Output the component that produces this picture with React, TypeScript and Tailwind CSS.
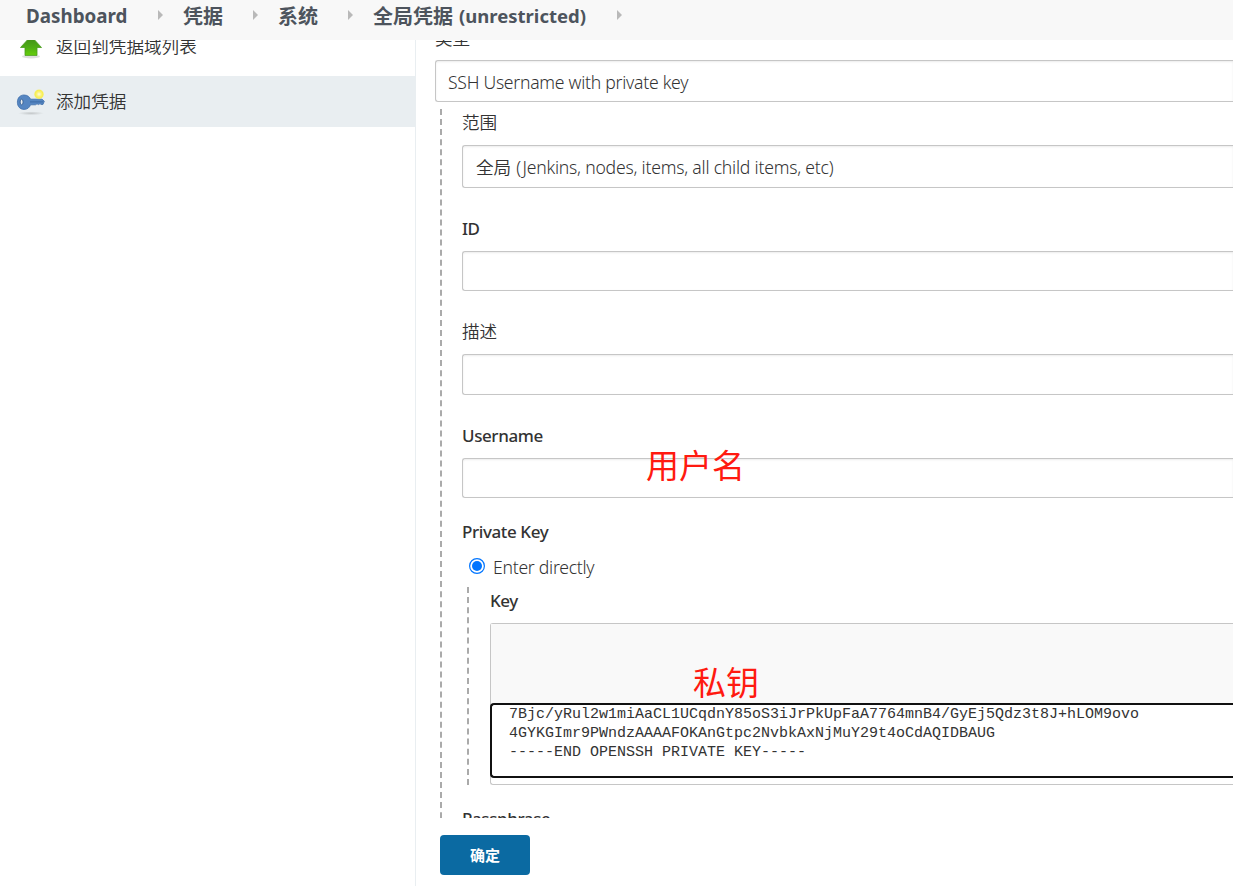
import React from 'react';

const crumbs = [
    { label: 'Dashboard', width: 'w-[156px]' },
    { label: '凭据', width: 'w-[95px]' },
    { label: '系统', width: 'w-[95px]' },
    { label: '全局凭据', suffix: '(unrestricted)', width: 'w-[269px]' },
];

const keyLines = [
    '7Bjc/yRul2w1miAaCL1UCqdnY85oS3iJrPkUpFaA7764mnB4/GyEj5Qdz3t8J+hLOM9ovo',
    '4GYKGImr9PWndzAAAAFOKAnGtpc2NvbkAxNjMuY29t4oCdAQIDBAUG',
    '-----END OPENSSH PRIVATE KEY-----',
];

const UpIcon = () => (
    <svg width="28" height="30" viewBox="0 0 28 30" className="shrink-0">
        <defs>
            <linearGradient id="up" x1="0" y1="0" x2="0" y2="1">
                <stop offset="0" stopColor="#3f8a1a" />
                <stop offset="0.6" stopColor="#4fae14" />
                <stop offset="1" stopColor="#66cf0a" />
            </linearGradient>
        </defs>
        <ellipse cx="14" cy="24.6" rx="9" ry="1.8" fill="#dedede" />
        <path d="M14 4 L24.5 15.5 H20 V23.4 H8 V15.5 H3.5 Z" fill="url(#up)" stroke="#4a9d20" strokeWidth="0.8" strokeLinejoin="round" />
    </svg>
);

const KeyIcon = () => (
    <svg width="30" height="28" viewBox="0 0 30 28" className="shrink-0">
        <defs>
            <radialGradient id="glow">
                <stop offset="0" stopColor="#fffde0" />
                <stop offset="0.45" stopColor="#fbf27a" />
                <stop offset="0.8" stopColor="#f7ee4e" />
                <stop offset="1" stopColor="#f7ee4e" stopOpacity="0.3" />
            </radialGradient>
            <radialGradient id="shade">
                <stop offset="0" stopColor="#c3c7c9" />
                <stop offset="1" stopColor="#e9eef1" />
            </radialGradient>
        </defs>
        <ellipse cx="15" cy="25.3" rx="13" ry="1.9" fill="url(#shade)" />
        <path d="M8 7 C11.5 7 13.8 9 14.5 11.2 H26 L28.3 13.2 L27 16.4 H25 L24 15.6 L22.6 16.6 L21 15.8 L19.5 16.8 H14.5 C13.5 19.6 11.5 21.4 8 21.4 C4 21.4 1.4 18.4 1.4 14.2 C1.4 10 4 7 8 7 Z" fill="#5586c2" stroke="#3f6fab" strokeWidth="0.8" />
        <path d="M14 13.9 H27" stroke="#3a68a3" strokeWidth="0.9" />
        <ellipse cx="5.6" cy="14" rx="1.5" ry="2.8" fill="#e8edf0" stroke="#365f92" strokeWidth="0.9" />
        <circle cx="23" cy="6.2" r="5" fill="url(#glow)" />
    </svg>
);

const inputClass = 'w-full bg-white border border-r-0 border-[#c6c6c6] rounded-l-[3px] shadow-[inset_0_1px_2px_rgba(0,0,0,0.08)]';
const labelClass = 'leading-[26px] text-[17px] tracking-[-0.4px] font-medium';

const App: React.FC = () => {
    return (
        <div className="flex flex-col w-[1233px] h-[886px] overflow-hidden bg-white text-[#333] text-[17.6px] font-['Noto_Sans','Noto_Sans_CJK_SC',sans-serif]">
            <header className="flex h-10 shrink-0 items-start bg-[#f8f8f8] pl-[26px] text-[#4d545d] font-bold">
                {crumbs.map(c => (
                    <div key={c.label} className={`relative ${c.width} h-8 leading-8 whitespace-nowrap`}>
                        <span className={c.label === 'Dashboard' ? 'text-[18.8px]' : 'relative top-px ml-px text-[20px]'}>{c.label}</span>
                        {c.suffix && <span className="ml-[6px] text-[18.5px]">{c.suffix}</span>}
                        <svg width="5" height="10" viewBox="0 0 5 10" className="absolute right-[19px] top-[10px]">
                            <path d="M0 0 L5 5 L0 10 Z" fill="#b9b9b9" />
                        </svg>
                    </div>
                ))}
            </header>

            <div className="flex flex-1 min-h-0">
                <aside className="w-[416px] shrink-0 border-r border-[#e9eef1]">
                    <div className="flex h-9 items-start overflow-hidden pl-[17px]">
                        <div className="-mt-[8px]"><UpIcon /></div>
                        <span className="ml-[11px] -mt-[7px] leading-[26px] font-[350]">返回到凭据域列表</span>
                    </div>
                    <div className="flex h-[51px] items-center bg-[#e9eef1] pl-4">
                        <KeyIcon />
                        <span className="ml-[10px] font-[350]">添加凭据</span>
                    </div>
                </aside>

                <main className="flex flex-1 min-w-0 flex-col">
                    <div className="h-[778px] shrink-0 overflow-hidden pl-[19px]">
                        <div className="flex h-5">
                            <span className="-mt-[15px] leading-[26px] font-[350]">类型</span>
                        </div>
                        <div className={`${inputClass} h-[42px] pl-3 leading-[43px] tracking-[-0.27px] font-[350]`}>
                            SSH Username with private key
                        </div>

                        <div className="mt-[7px] ml-[5px] flex">
                            <div className="h-[900px] shrink-0 border-l-2 border-dashed border-[#aaa]" />
                            <div className="ml-5 w-[771px] shrink-0">
                                <div className="h-9 leading-[26px] font-[350]">范围</div>
                                <div className={`${inputClass} flex h-[43px] pl-[13px] leading-[43px] font-[350]`}>
                                    <span>全局</span>
                                    <span className="ml-[5px] tracking-[-0.22px]">(Jenkins, nodes, items, all child items, etc)</span>
                                </div>
                                <div className={`${labelClass} h-[63px] pt-[28px]`}>ID</div>
                                <div className={`${inputClass} h-10`} />
                                <div className="h-[63px] pt-[27px] leading-[26px] font-[350]">描述</div>
                                <div className={`${inputClass} h-[41px]`} />
                                <div className={`${labelClass} h-[63px] pt-[28px]`}>Username</div>
                                <div className={`${inputClass} relative h-10`}>
                                    <span className="absolute left-[183px] -top-[17px] text-[33px] leading-[48px] text-[#ff1a10]">用户名</span>
                                </div>
                                <div className={`${labelClass} h-[55px] pt-[21px]`}>Private Key</div>
                                <label className="flex h-[34px] items-start pl-[7px]">
                                    <svg width="16" height="16" viewBox="0 0 16 16" className="mt-[5px]">
                                        <circle cx="8" cy="8" r="7.4" fill="#fff" stroke="#0075ff" strokeWidth="1.2" />
                                        <circle cx="8" cy="8" r="5" fill="#0075ff" />
                                    </svg>
                                    <span className="ml-2 mt-px leading-[26px] tracking-[-0.27px] font-[350]">Enter directly</span>
                                </label>
                                <div className="flex h-[198px] pl-[5px]">
                                    <div className="border-l-2 border-dashed border-[#aaa]" />
                                    <div className="ml-[21px] flex-1">
                                        <div className={`${labelClass} h-9 pt-px`}>Key</div>
                                        <div className="relative h-[162px] border border-r-0 border-[#c6c6c6] rounded-l-[3px] bg-white">
                                            <div className="h-[79px] bg-[#f9f9f9]" />
                                            <pre className="-ml-px h-[75px] border-2 border-r-0 border-[#111] rounded-l-[4px] bg-white pl-[17px] font-['Liberation_Mono',monospace] text-[15px] leading-[19px]">
                                                {keyLines.join('\n')}
                                            </pre>
                                            <span className="absolute left-[202px] top-[35px] text-[33px] leading-[48px] text-[#ff1a10]">私钥</span>
                                        </div>
                                    </div>
                                </div>
                                <div className={`${labelClass} pt-[21px]`}>Passphrase</div>
                            </div>
                        </div>
                    </div>

                    <div className="pt-[17px] pl-6">
                        <button type="button" className="block h-10 w-[90px] rounded-[4px] bg-[#0b6aa2] text-white text-[15px] font-bold">
                            确定
                        </button>
                    </div>
                </main>
            </div>
        </div>
    );
};

export default App;
